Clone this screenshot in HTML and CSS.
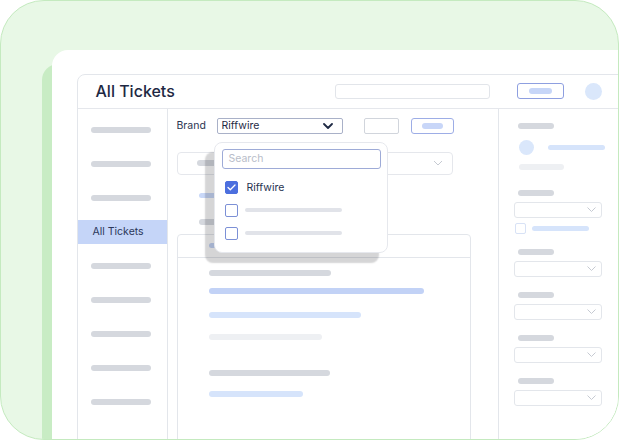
FILE: index.html
```html
<!DOCTYPE html>
<html lang="en">
<head>
<meta charset="utf-8">
<title>All Tickets</title>
<link rel="stylesheet" href="styles.css">
</head>
<body>
<div class="frame">
  <div class="panel">
    <div class="app">
      <header class="app-head">
        <h1 class="title">All Tickets</h1>
        <div class="head-search"></div>
        <div class="head-btn"><span class="pill pill-head"></span></div>
        <div class="avatar"></div>
      </header>
      <div class="app-body">
        <nav class="side">
          <div class="side-item"><span class="pill pill-side"></span></div>
          <div class="side-item"><span class="pill pill-side"></span></div>
          <div class="side-item"><span class="pill pill-side"></span></div>
          <div class="side-item active">All Tickets</div>
          <div class="side-item"><span class="pill pill-side"></span></div>
          <div class="side-item"><span class="pill pill-side"></span></div>
          <div class="side-item"><span class="pill pill-side"></span></div>
          <div class="side-item"><span class="pill pill-side"></span></div>
          <div class="side-item"><span class="pill pill-side"></span></div>
        </nav>
        <main class="main">
          <div class="filter-row">
            <span class="label">Brand</span>
            <div class="brand-select">
              <span class="value">Riffwire</span>
              <svg class="chev-dark" width="10" height="6" viewBox="0 0 10 6"><path d="M1 1l4 4 4-4" fill="none" stroke="#1f2a44" stroke-width="1.8" stroke-linecap="round" stroke-linejoin="round"/></svg>
              <div class="popup">
                <div class="pop-search">Search</div>
                <div class="pop-row">
                  <span class="check checked"><svg width="9" height="7" viewBox="0 0 9 7"><path d="M1 3.5l2.3 2.2L8 1" fill="none" stroke="#fff" stroke-width="1.3" stroke-linecap="round" stroke-linejoin="round"/></svg></span>
                  <span class="pop-label">Riffwire</span>
                </div>
                <div class="pop-row">
                  <span class="check"></span>
                  <span class="pill pill-pop"></span>
                </div>
                <div class="pop-row">
                  <span class="check"></span>
                  <span class="pill pill-pop"></span>
                </div>
              </div>
            </div>
            <div class="btn-plain"></div>
            <div class="btn-blue"><span class="pill pill-btn"></span></div>
          </div>
          <div class="big-select">
            <span class="pill pill-big"></span>
            <svg class="chev-light" width="10" height="6" viewBox="0 0 10 6"><path d="M1 1l4 4 4-4" fill="none" stroke="#c6cad2" stroke-width="1"/></svg>
          </div>
          <span class="pill pill-tab-blue"></span>
          <span class="pill pill-tab-gray"></span>
          <div class="card">
            <div class="card-head"><span class="pill pill-card-head"></span></div>
            <div class="card-body">
              <div class="group group-1">
                <span class="pill gray w122"></span>
                <span class="pill blue w215"></span>
              </div>
              <div class="group group-2">
                <span class="pill lblue w152"></span>
                <span class="pill vlight w113"></span>
              </div>
              <div class="group group-3">
                <span class="pill gray w121"></span>
                <span class="pill lblue w94"></span>
              </div>
            </div>
          </div>
        </main>
        <aside class="aside">
          <span class="pill gray w36 aside-title"></span>
          <div class="user-row">
            <span class="user-dot"></span>
            <span class="pill user-pill"></span>
          </div>
          <span class="pill vlight w45 user-sub"></span>
          <div class="field field-first">
            <span class="pill gray w36"></span>
            <div class="mini-select"><svg width="9" height="5" viewBox="0 0 9 5"><path d="M0.5 0.5l4 4 4-4" fill="none" stroke="#c6cad2" stroke-width="1"/></svg></div>
            <div class="check-row"><span class="mini-check"></span><span class="pill lblue w57"></span></div>
          </div>
          <div class="field">
            <span class="pill gray w36"></span>
            <div class="mini-select"><svg width="9" height="5" viewBox="0 0 9 5"><path d="M0.5 0.5l4 4 4-4" fill="none" stroke="#c6cad2" stroke-width="1"/></svg></div>
          </div>
          <div class="field">
            <span class="pill gray w36"></span>
            <div class="mini-select"><svg width="9" height="5" viewBox="0 0 9 5"><path d="M0.5 0.5l4 4 4-4" fill="none" stroke="#c6cad2" stroke-width="1"/></svg></div>
          </div>
          <div class="field">
            <span class="pill gray w36"></span>
            <div class="mini-select"><svg width="9" height="5" viewBox="0 0 9 5"><path d="M0.5 0.5l4 4 4-4" fill="none" stroke="#c6cad2" stroke-width="1"/></svg></div>
          </div>
          <div class="field">
            <span class="pill gray w36"></span>
            <div class="mini-select"><svg width="9" height="5" viewBox="0 0 9 5"><path d="M0.5 0.5l4 4 4-4" fill="none" stroke="#c6cad2" stroke-width="1"/></svg></div>
          </div>
        </aside>
      </div>
    </div>
  </div>
</div>
</body>
</html>
```

FILE: styles.css
```css
* { box-sizing: border-box; }

html, body {
  margin: 0;
  background: #ffffff;
  font-family: Inter, "Noto Sans", sans-serif;
  color: #1f2a44;
}

.frame {
  width: 619px;
  height: 440px;
  border: 1.5px solid #c4eabf;
  border-radius: 44px;
  background: #e8f8e6;
  overflow: hidden;
  padding: 48.5px 0 0 50.5px;
}

.panel {
  width: 620px;
  height: 430px;
  background: #ffffff;
  border-top-left-radius: 16px;
  box-shadow: -10px 14px 0 #c8ecc4;
  padding: 24px 0 0 25px;
}

.app {
  width: 560px;
  height: 400px;
  border: 1px solid #e3e6eb;
  border-radius: 8px 8px 0 0;
  background: #ffffff;
}

/* header */
.app-head {
  display: flex;
  align-items: center;
  height: 34px;
  border-bottom: 1px solid #e5e7ec;
  padding-left: 18px;
}

.title {
  margin: 0;
  flex: 0 0 239px;
  font-size: 16px;
  font-weight: 500;
  color: #1e2843;
  letter-spacing: 0;
}

.head-search {
  width: 155px;
  height: 15px;
  border: 1px solid #e2e5ea;
  border-radius: 3px;
}

.head-btn {
  margin-left: 27px;
  width: 47px;
  height: 16px;
  border: 1px solid #8e9fe0;
  border-radius: 3px;
  display: flex;
  align-items: center;
  justify-content: center;
}

.avatar {
  margin-left: 21px;
  width: 17px;
  height: 17px;
  border-radius: 50%;
  background: #dae7fb;
}

/* pills */
.pill {
  display: block;
  height: 6px;
  border-radius: 3px;
  background: #d5d8de;
  flex: none;
}
.pill-head { width: 23px; height: 6px; background: #c7d6f8; }
.gray { background: #d5d8de; }
.blue { background: #c2d2f6; }
.lblue { background: #d6e4fb; }
.vlight { background: #eef0f3; }
.w36 { width: 36px; }
.w45 { width: 45px; }
.w57 { width: 57px; height: 5px; }
.w94 { width: 94px; }
.w113 { width: 113px; }
.w121 { width: 121px; }
.w122 { width: 122px; }
.w152 { width: 152px; }
.w215 { width: 215px; }

/* body grid */
.app-body {
  display: grid;
  grid-template-columns: 90px 331px 1fr;
  height: 364px;
}

.side {
  border-right: 1px solid #e3e6eb;
  padding-top: 9px;
  display: flex;
  flex-direction: column;
  gap: 10px;
}

.side-item {
  height: 24px;
  display: flex;
  align-items: center;
  padding-left: 13px;
  font-size: 10.5px;
  color: #2b375a;
}
.side-item.active {
  background: #c5d5f8;
  padding-left: 15px;
}
.pill-side { width: 60px; }

/* main */
.main {
  border-right: 1px solid #e3e6eb;
  padding: 9px 0 0 9px;
}

.filter-row {
  display: flex;
  align-items: center;
  height: 16px;
}

.label {
  width: 40px;
  font-size: 10.5px;
  color: #2b3552;
}

.brand-select {
  position: relative;
  width: 126px;
  height: 16px;
  border: 1px solid #a9b1c8;
  border-radius: 2px;
  display: flex;
  align-items: center;
  padding: 0 9px 0 4px;
  font-size: 10.5px;
  color: #1f2a44;
}
.brand-select .value { flex: 1; }
.chev-dark { display: block; }

.btn-plain {
  margin-left: 21px;
  width: 35px;
  height: 16px;
  border: 1px solid #d1d5dc;
  border-radius: 2px;
}

.btn-blue {
  margin-left: 12px;
  width: 43px;
  height: 16px;
  border: 1px solid #9dade6;
  border-radius: 3px;
  display: flex;
  align-items: center;
  justify-content: center;
}
.pill-btn { width: 21px; background: #c8d6f8; }

.big-select {
  margin-top: 18px;
  width: 276px;
  height: 23px;
  border: 1px solid #e5e7ec;
  border-radius: 4px;
  display: flex;
  align-items: center;
  justify-content: space-between;
  padding: 0 9px 0 19px;
}
.pill-big { width: 40px; }
.chev-light { display: block; }

.pill-tab-blue {
  margin: 18px 0 0 22px;
  width: 40px;
  height: 5px;
  background: #c9d8f8;
}
.pill-tab-gray {
  margin: 21px 0 0 22px;
  width: 40px;
}

.card {
  margin-top: 9px;
  width: 294px;
  height: 220px;
  border: 1px solid #e3e6eb;
  border-radius: 4px;
}
.card-head {
  height: 23px;
  border-bottom: 1px solid #e3e6eb;
  display: flex;
  align-items: center;
  padding-left: 31px;
}
.pill-card-head { width: 20px; height: 5px; background: #c4d3f5; }

.card-body {
  padding: 12px 0 0 31px;
}
.group {
  display: flex;
  flex-direction: column;
}
.group-1 { gap: 12px; }
.group-2 { gap: 16px; margin-top: 18px; }
.group-3 { gap: 15px; margin-top: 30px; }

/* popup */
.popup {
  position: absolute;
  top: 23px;
  left: -4px;
  width: 174px;
  height: 111px;
  background: #ffffff;
  border: 1px solid #e6e8ed;
  border-radius: 8px;
  padding: 6px 0 0 7px;
  box-shadow: -9px 10px 1.5px rgba(20, 22, 30, 0.18);
  z-index: 2;
}

.pop-search {
  width: 159px;
  height: 20px;
  border: 1px solid #9eabd7;
  border-radius: 3px;
  padding-left: 6px;
  display: flex;
  align-items: center;
  font-size: 10.5px;
  color: #b8bdc9;
}

.pop-row {
  height: 23px;
  display: flex;
  align-items: center;
  padding-left: 3px;
}
.pop-search + .pop-row { margin-top: 7px; }

.check {
  width: 13px;
  height: 13px;
  border: 1.5px solid #7c90d6;
  border-radius: 2px;
  background: #ffffff;
  display: flex;
  align-items: center;
  justify-content: center;
  flex: none;
}
.check.checked {
  background: #4c6fde;
  border-color: #4c6fde;
}
.pop-label {
  margin-left: 9px;
  font-size: 10.5px;
  color: #27324f;
}
.pill-pop {
  margin-left: 7px;
  width: 97px;
  height: 4px;
  background: #e1e3e9;
}

/* aside */
.aside {
  padding: 14px 0 0 15px;
  display: flex;
  flex-direction: column;
  align-items: flex-start;
}
.aside-title { margin-left: 4px; }

.user-row {
  margin-top: 11px;
  margin-left: 5px;
  display: flex;
  align-items: center;
}
.user-dot {
  width: 15px;
  height: 15px;
  border-radius: 50%;
  background: #dae7fb;
}
.user-pill {
  margin-left: 14px;
  width: 57px;
  height: 5px;
  background: #d6e4fb;
}
.user-sub { margin: 9px 0 0 5px; }

.field {
  display: flex;
  flex-direction: column;
  align-items: flex-start;
  margin-top: 15px;
}
.field-first { margin-top: 20px; }
.field > .pill { margin-left: 4px; }

.mini-select {
  margin-top: 6px;
  width: 88px;
  height: 16px;
  border: 1px solid #e3e6eb;
  border-radius: 3px;
  display: flex;
  align-items: center;
  justify-content: flex-end;
  padding-right: 5px;
}
.mini-select svg { display: block; }

.check-row {
  margin-top: 5px;
  margin-left: 1px;
  display: flex;
  align-items: center;
}
.mini-check {
  width: 11px;
  height: 11px;
  border: 1px solid #d8e2f6;
  border-radius: 2px;
}
.check-row .pill { margin-left: 6px; }
```
